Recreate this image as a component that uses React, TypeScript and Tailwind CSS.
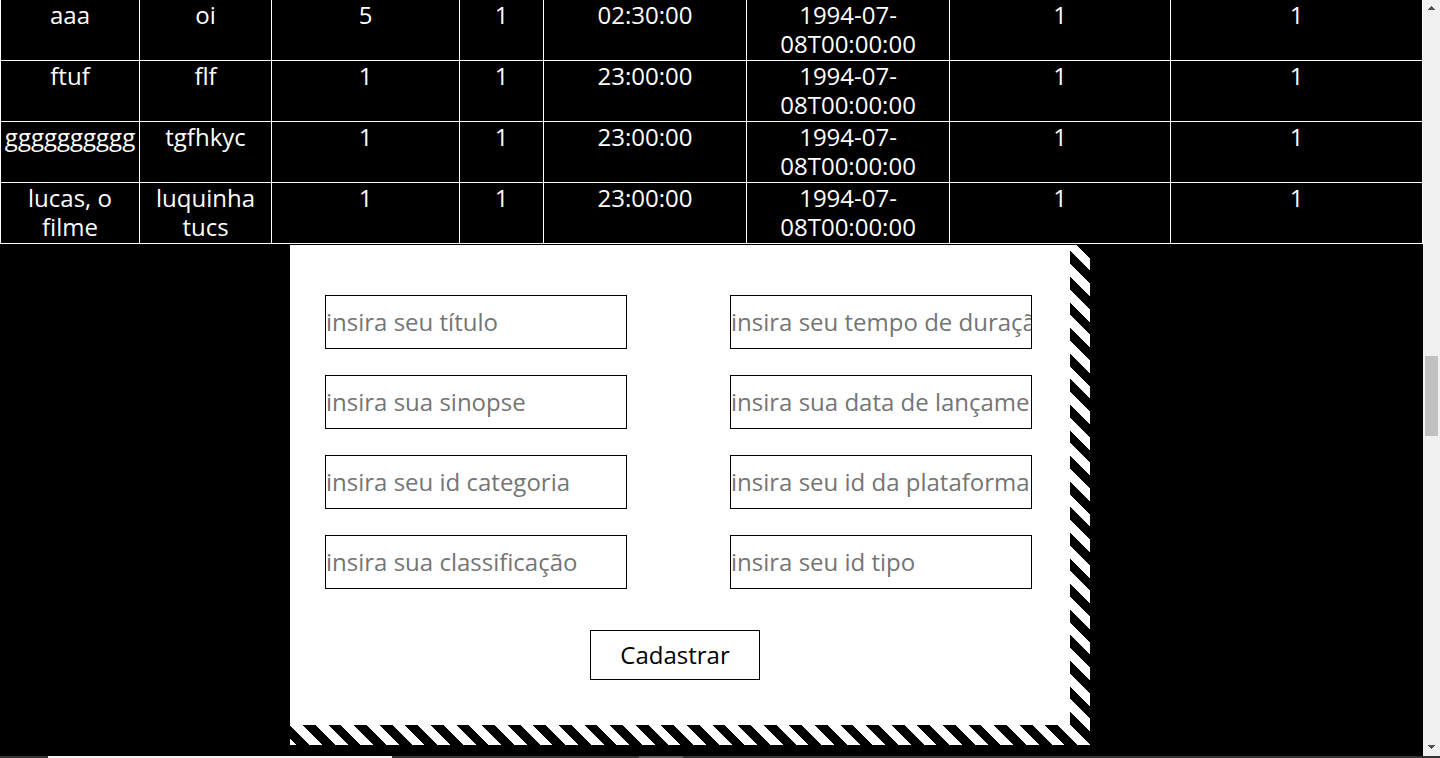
import React from "react";

type Movie = {
  title: string;
  synopsis: string;
  category: string;
  rating: string;
  duration: string;
  release: string;
  platform: string;
  kind: string;
};

const movies: Movie[] = [
  { title: "aaa", synopsis: "oi", category: "5", rating: "1", duration: "02:30:00", release: "1994-07-08T00:00:00", platform: "1", kind: "1" },
  { title: "ftuf", synopsis: "flf", category: "1", rating: "1", duration: "23:00:00", release: "1994-07-08T00:00:00", platform: "1", kind: "1" },
  { title: "gggggggggg", synopsis: "tgfhkyc", category: "1", rating: "1", duration: "23:00:00", release: "1994-07-08T00:00:00", platform: "1", kind: "1" },
  { title: "lucas, o filme", synopsis: "luquinha tucs", category: "1", rating: "1", duration: "23:00:00", release: "1994-07-08T00:00:00", platform: "1", kind: "1" },
];

const fields = [
  "insira seu título",
  "insira seu tempo de duração",
  "insira sua sinopse",
  "insira sua data de lançamento",
  "insira seu id categoria",
  "insira seu id da plataforma",
  "insira sua classificação",
  "insira seu id tipo",
];

function MovieTable() {
  return (
    <table className="w-full table-fixed border-separate border-spacing-0 text-center text-[24px] leading-[29px] font-medium text-white">
      <colgroup>
        <col className="w-[9.84%]" />
        <col className="w-[9.28%]" />
        <col className="w-[13.21%]" />
        <col className="w-[5.9%]" />
        <col className="w-[14.27%]" />
        <col className="w-[14.27%]" />
        <col className="w-[15.53%]" />
        <col />
      </colgroup>
      <tbody>
        {movies.map((m) => (
          <tr key={m.title}>
            {Object.values(m).map((value, i) => (
              <td key={i} className="border-r border-b border-white px-px pt-0 pb-[2px] align-top first:border-l">
                {value}
              </td>
            ))}
          </tr>
        ))}
      </tbody>
    </table>
  );
}

function MovieForm() {
  return (
    <form
      onSubmit={(e) => e.preventDefault()}
      className="w-[800px] bg-[repeating-linear-gradient(45deg,#fff_0%,#fff_0.538%,#000_0.538%,#000_1.523%,#fff_1.523%,#fff_1.969%)] pr-5 pb-5"
    >
      <div className="bg-white px-[35px] pt-[50px] pb-[45px]">
        <div className="grid grid-cols-[302px_302px] gap-x-[103px] gap-y-[26px]">
          {fields.map((text) => (
            <input
              key={text}
              type="text"
              aria-label={text}
              placeholder={text}
              className="h-[54px] w-full border border-black bg-white pb-[2px] text-[24px] text-black outline-none placeholder:text-[#757575] placeholder:opacity-100"
            />
          ))}
        </div>
        <div className="mt-[41px] flex justify-center pr-[10px]">
          <button type="submit" className="h-[50px] w-[170px] border border-black bg-white text-[24px] text-black">
            Cadastrar
          </button>
        </div>
      </div>
    </form>
  );
}

function ScrollBar() {
  return (
    <div className="flex w-[17px] shrink-0 flex-col items-center bg-[#f1f1f1] pt-[6px] pb-[7px]">
      <svg className="h-1 w-[7px]" viewBox="0 0 7 4" fill="#505050" shapeRendering="crispEdges">
        <path d="M3 0h1v1h1v1h1v1h1v1H0V3h1V2h1V1h1z" />
      </svg>
      <div className="grow-[346]" />
      <div className="h-20 w-[13px] bg-[#c1c1c1]" />
      <div className="grow-[309]" />
      <svg className="h-1 w-[7px]" viewBox="0 0 7 4" fill="#505050" shapeRendering="crispEdges">
        <path d="M0 0h7v1H6v1H5v1H4v1H3V3H2V2H1V1H0z" />
      </svg>
    </div>
  );
}

export default function App() {
  return (
    <div className="flex h-screen flex-col overflow-hidden bg-black font-['Trebuchet_MS','Open_Sans',sans-serif]">
      <div className="flex min-h-0 flex-1">
        <main className="min-w-0 flex-1 overflow-hidden">
          <MovieTable />
          <div className="mt-px flex justify-center pr-[43px]">
            <MovieForm />
          </div>
        </main>
        <ScrollBar />
      </div>
      <div className="flex h-[2px] shrink-0 bg-[#333]">
        <div className="ml-12 w-[344px] bg-[#f2f2f2]" />
        <div className="ml-[247px] w-11 bg-[#5a5a5a]" />
      </div>
    </div>
  );
}
